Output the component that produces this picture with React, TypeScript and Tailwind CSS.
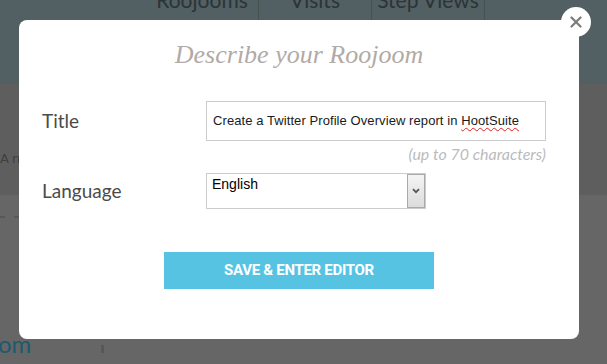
import React from "react";

const CloseIcon = () => (
    <svg width="12" height="12" viewBox="0 0 12 12" fill="none" stroke="#7b7b7b" strokeWidth="2.2" strokeLinecap="round">
        <path d="M1.5 1.5l9 9M10.5 1.5l-9 9" />
    </svg>
);

const Chevron = () => (
    <svg width="8" height="6" viewBox="0 0 8 6" fill="none" stroke="#555" strokeWidth="1.8">
        <path d="M1 1.2l3 3 3-3" />
    </svg>
);

export default function App() {
    return (
        <div className="relative w-[607px] h-[364px] overflow-hidden bg-[#666666]">
            {/* page behind the overlay */}
            <div className="flex flex-col">
                <div className="h-[84px] bg-[#525f63] flex">
                    <div className="w-[146px]" />
                    {["Roojooms", "Visits", "Step Views"].map((tab) => (
                        <div
                            key={tab}
                            className="w-[113px] h-[20px] border-r border-[#45504f] flex items-end justify-center"
                            style={{ fontFamily: "Lato, sans-serif" }}
                        >
                            <span className="text-[21px] leading-none text-[#2c3437] -translate-y-[10px]">{tab}</span>
                        </div>
                    ))}
                </div>
                <div className="h-[111px] bg-[#5e5e5e] flex items-center pt-[38px]">
                    <span className="text-[13px] tracking-[3px] text-[#404040]" style={{ fontFamily: "'DejaVu Sans', sans-serif" }}>Analytics</span>
                </div>
                <div className="h-[44px] flex items-center">
                    <div className="flex gap-[9px]">
                        {[0, 1, 2, 3, 4].map((i) => (
                            <div key={i} className="w-[5px] h-[2px] bg-[#585858]" />
                        ))}
                    </div>
                </div>
                <div className="h-[90px]" />
                <div className="flex items-start">
                    <span className="text-[24px] leading-none text-[#1d5a6d] -ml-[2px] mt-[3px]" style={{ fontFamily: "Lato, sans-serif" }}>om</span>
                    <div className="ml-[70px] mt-[16px] w-[3px] h-[8px] bg-[#575757]" />
                </div>
            </div>

            {/* modal */}
            <div className="absolute left-[19px] top-[20px] w-[560px] h-[319px] bg-white rounded-[8px]">
                <div className="absolute -right-[12px] -top-[13px] w-[30px] h-[30px] rounded-full bg-white flex items-center justify-center">
                    <CloseIcon />
                </div>

                <div className="pt-[20px] pl-[23px] pr-[33px]">
                    <h2
                        className="text-center italic text-[26px] leading-[30px] text-[#b1aaa6] pl-[10px]"
                        style={{ fontFamily: "'Liberation Serif', serif" }}
                    >
                        Describe your Roojoom
                    </h2>

                    <div className="mt-[31px] flex items-center">
                        <label className="w-[164px] text-[19px] text-[#4a4a4a]" style={{ fontFamily: "Lato, sans-serif" }}>Title</label>
                        <div className="w-[340px] h-[40px] border border-[#cccccc] flex items-center px-[6px]">
                            <span className="text-[13px] tracking-[0.08px] text-[#1a1a1a] whitespace-nowrap" style={{ fontFamily: "'Liberation Sans', Arial, sans-serif" }}>
                                Create a Twitter Profile Overview report in{" "}
                                <span className="underline decoration-wavy decoration-[#e02020] decoration-1 underline-offset-2">HootSuite</span>
                            </span>
                        </div>
                    </div>
                    <div className="mt-[4px] text-right italic text-[16px] leading-[18px] text-[#bbbbbb]" style={{ fontFamily: "Lato, sans-serif" }}>
                        (up to 70 characters)
                    </div>

                    <div className="mt-[10px] flex items-center">
                        <label className="w-[164px] text-[19px] text-[#4a4a4a]" style={{ fontFamily: "Lato, sans-serif" }}>Language</label>
                        <div className="w-[220px] h-[36px] border border-[#cccccc] flex">
                            <div className="flex-1 pl-[5px] pt-[1px] text-[14px] text-black leading-[18px]" style={{ fontFamily: "'Liberation Sans', Arial, sans-serif" }}>
                                English
                            </div>
                            <div className="w-[18px] border border-[#a9a9a9] bg-gradient-to-b from-[#f4f4f4] to-[#dcdcdc] flex items-center justify-center">
                                <Chevron />
                            </div>
                        </div>
                    </div>
                </div>

                <div className="mt-[43px] flex justify-center">
                    <button
                        className="w-[270px] h-[37px] bg-[#56c3e3] text-white font-bold text-[15px] tracking-[-0.3px]"
                        style={{ fontFamily: "Roboto, sans-serif" }}
                    >
                        SAVE &amp; ENTER EDITOR
                    </button>
                </div>
            </div>
        </div>
    );
}
